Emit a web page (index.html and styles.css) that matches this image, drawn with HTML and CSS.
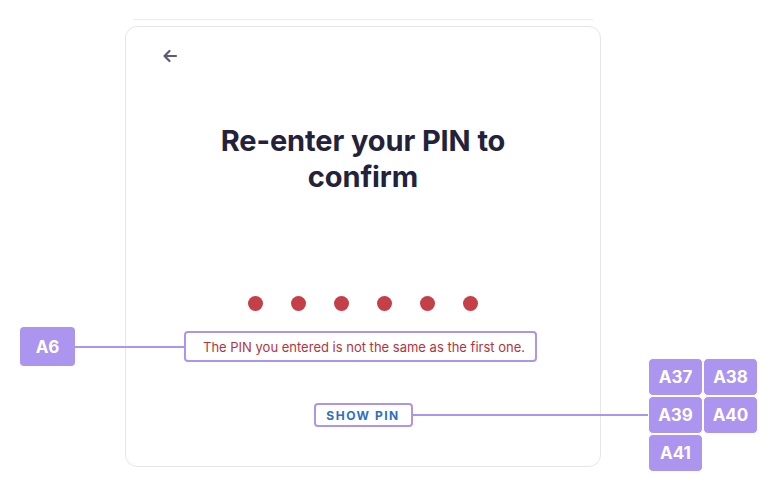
FILE: index.html
```html
<!DOCTYPE html>
<html lang="en">
<head>
    <meta charset="UTF-8" />
    <title>Re-enter PIN</title>
    <link rel="stylesheet" href="styles.css">
</head>
<body>
    <div class="stage">
        <div class="top-rule"></div>

        <div class="card">
            <button class="back" aria-label="Back">
                <svg width="16" height="14" viewBox="0 0 16 14">
                    <path d="M14 7H2.5M7.5 2L2.5 7l5 5" fill="none" stroke="#5d5a78" stroke-width="2.2" stroke-linecap="round" stroke-linejoin="round"/>
                </svg>
            </button>

            <h1 class="title">Re-enter your PIN to<br>confirm</h1>

            <div class="dots">
                <span class="dot"></span>
                <span class="dot"></span>
                <span class="dot"></span>
                <span class="dot"></span>
                <span class="dot"></span>
                <span class="dot"></span>
            </div>

            <div class="error mark">The PIN you entered is not the same as the first one.</div>

            <button class="show-pin mark">SHOW PIN</button>
        </div>

        <!-- annotations -->
        <div class="tag tag-a6">A6</div>
        <div class="leader leader-a6"></div>
        <div class="leader leader-show"></div>

        <div class="tag-grid">
            <div class="tag">A37</div>
            <div class="tag">A38</div>
            <div class="tag">A39</div>
            <div class="tag">A40</div>
            <div class="tag">A41</div>
        </div>
        <div class="spark">✦</div>
    </div>
</body>
</html>
```

FILE: styles.css
```css
:root {
    --ink: #23223a;
    --red: #c43f47;
    --err: #b5333d;
    --blue: #2e6fbf;
    --tag: #ac95ef;
    --line: #e6e6ea;
}

* {
    box-sizing: border-box;
    margin: 0;
    padding: 0;
}

body {
    background: #fff;
    font-family: 'Inter', 'Noto Sans', sans-serif;
    color: var(--ink);
}

.stage {
    position: relative;
    width: 776px;
    height: 496px;
    padding-top: 19px;
}

.top-rule {
    height: 1px;
    margin: 0 183px 0 133px;
    background: #ececef;
}

.card {
    width: 476px;
    height: 441px;
    margin: 6px 0 0 125px;
    border: 1px solid var(--line);
    border-radius: 12px;
    display: flex;
    flex-direction: column;
    align-items: center;
    padding: 20px 0 0;
}

.back {
    align-self: flex-start;
    margin-left: 35px;
    border: none;
    background: none;
    width: 18px;
    height: 18px;
    display: flex;
    align-items: center;
    justify-content: center;
}

.title {
    margin-top: 58px;
    font-size: 29px;
    line-height: 36px;
    font-weight: 700;
    text-align: center;
    letter-spacing: -0.1px;
}

.dots {
    margin-top: 101px;
    display: flex;
    gap: 28px;
}

.dot {
    width: 15px;
    height: 15px;
    border-radius: 50%;
    background: var(--red);
}

.mark {
    border: 2px solid var(--tag);
    border-radius: 4px;
    background: #fff;
}

.error {
    margin: 20px 5px 0 0;
    padding-left: 7px;
    width: 353px;
    height: 31px;
    display: flex;
    align-items: center;
    justify-content: center;
    font-size: 13px;
    color: var(--err);
}

.show-pin {
    margin-top: 41px;
    width: 99px;
    height: 24px;
    font-family: inherit;
    font-size: 12px;
    font-weight: 700;
    letter-spacing: 1.5px;
    color: var(--blue);
}

.tag {
    width: 55px;
    height: 38px;
    border-radius: 4px;
    background: var(--tag);
    color: #fff;
    font-size: 17px;
    font-weight: 700;
    display: flex;
    align-items: center;
    justify-content: center;
}

.tag-a6 {
    position: absolute;
    left: 20px;
    top: 327px;
    height: 39px;
}

.leader {
    position: absolute;
    height: 2px;
    background: var(--tag);
}

.leader-a6 {
    left: 75px;
    top: 346px;
    width: 110px;
}

.leader-show {
    left: 413px;
    top: 414px;
    width: 236px;
}

.tag-grid {
    position: absolute;
    left: 648px;
    top: 358px;
    display: grid;
    grid-template-columns: 55px 55px;
    grid-auto-rows: 38px;
}

.tag-grid .tag {
    border: 1px solid #fff;
    border-radius: 5px;
}

.spark {
    position: absolute;
    left: 697px;
    top: 388px;
    font-size: 12px;
    color: #fff;
    line-height: 16px;
}
```
